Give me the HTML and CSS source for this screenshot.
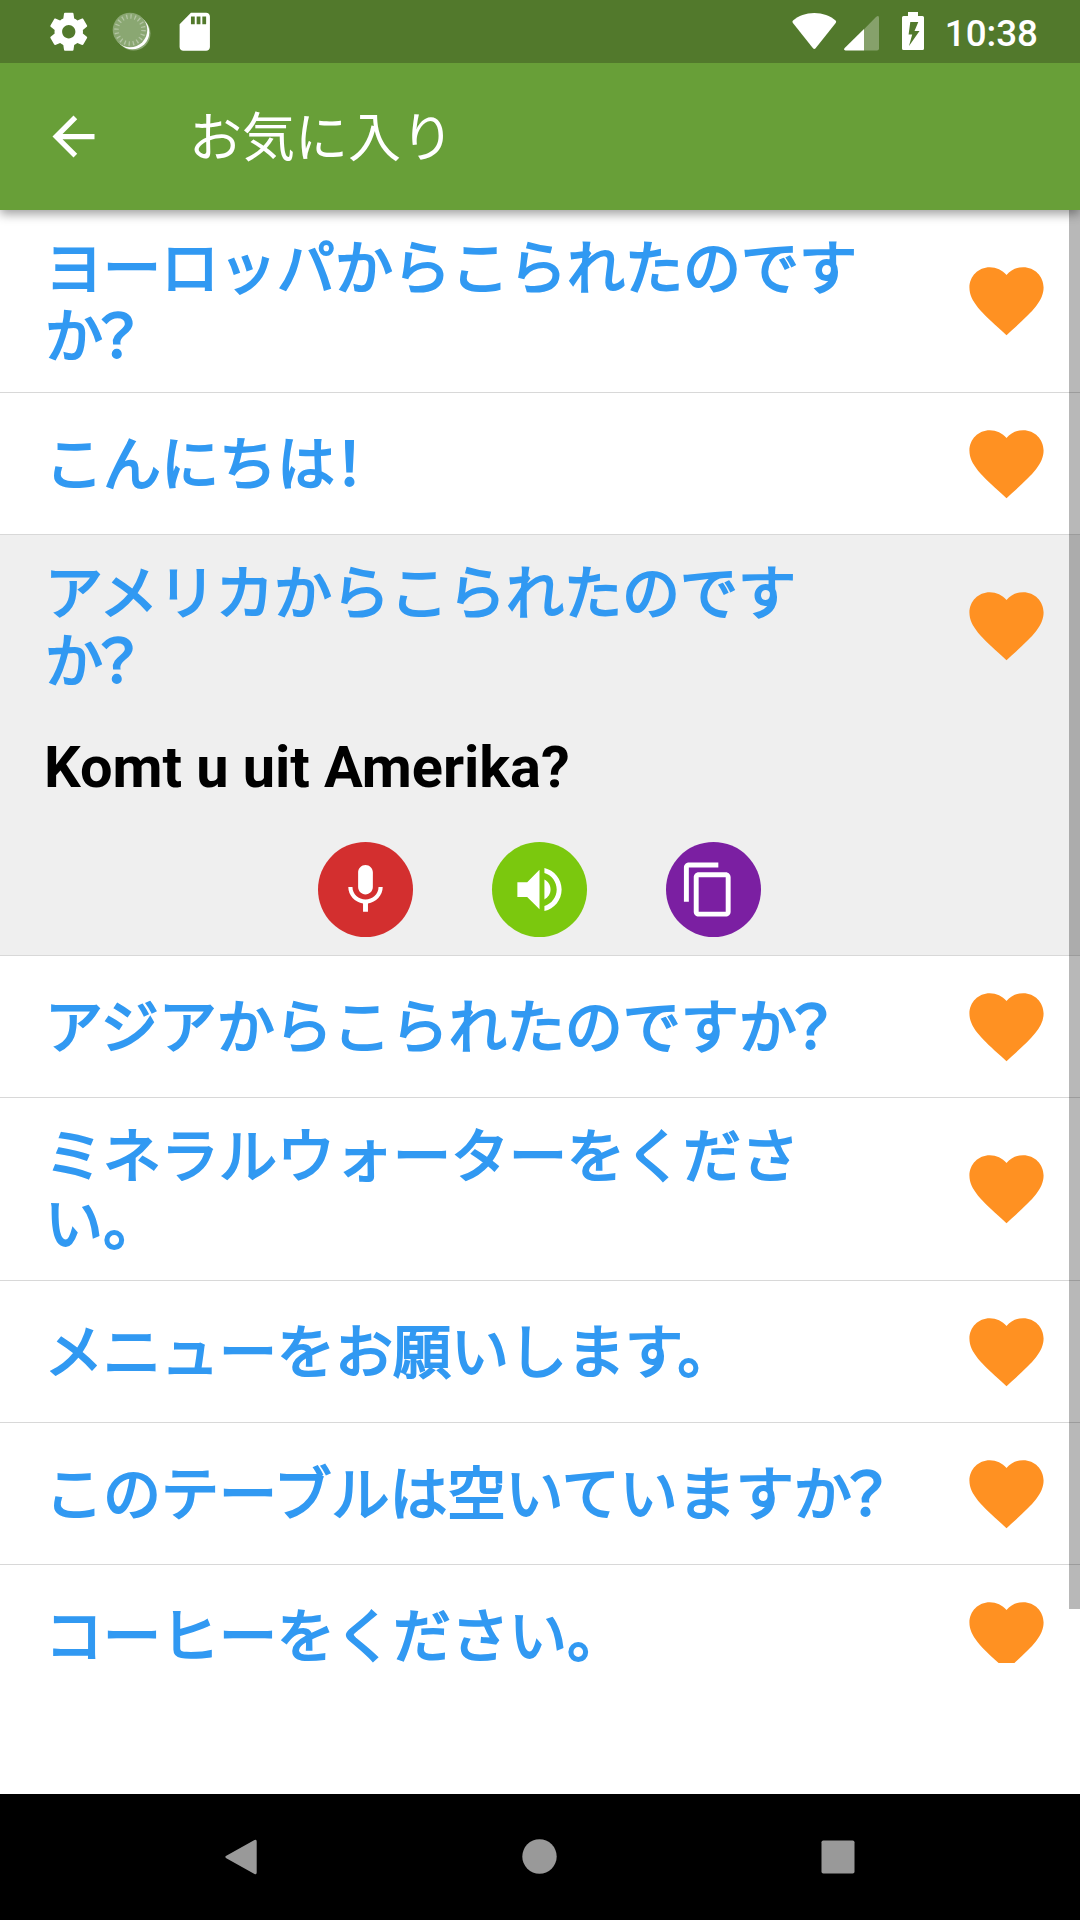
FILE: index.html
```html
<!DOCTYPE html>
<html lang="ja">
<head>
<meta charset="utf-8">
<title>お気に入り</title>
<link rel="stylesheet" href="styles.css">
</head>
<body>
<svg class="defs" width="0" height="0">
  <symbol id="heart" viewBox="0 0 24 24"><path d="M12 21.35l-1.45-1.32C5.4 15.36 2 12.28 2 8.5 2 5.42 4.42 3 7.5 3c1.74 0 3.41.81 4.5 2.09C13.09 3.81 14.76 3 16.5 3 19.58 3 22 5.42 22 8.5c0 3.78-3.4 6.86-8.55 11.54L12 21.35z"/></symbol>
</svg>
<div class="screen">
  <header class="status">
    <div class="status-left">
      <svg class="gear" viewBox="0 0 24 24"><path d="M19.43 12.98c.04-.32.07-.64.07-.98s-.03-.66-.07-.98l2.11-1.65c.19-.15.24-.42.12-.64l-2-3.46c-.12-.22-.39-.3-.61-.22l-2.49 1c-.52-.4-1.08-.73-1.69-.98l-.38-2.65C14.46 2.18 14.25 2 14 2h-4c-.25 0-.46.18-.49.42l-.38 2.65c-.61.25-1.17.59-1.69.98l-2.49-1c-.23-.09-.49 0-.61.22l-2 3.46c-.13.22-.07.49.12.64l2.11 1.65c-.04.32-.07.65-.07.98s.03.66.07.98l-2.11 1.65c-.19.15-.24.42-.12.64l2 3.46c.12.22.39.3.61.22l2.49-1c.52.4 1.08.73 1.69.98l.38 2.65c.03.24.24.42.49.42h4c.25 0 .46-.18.49-.42l.38-2.65c.61-.25 1.17-.59 1.69-.98l2.49 1c.23.09.49 0 .61-.22l2-3.46c.12-.22.07-.49-.12-.64l-2.11-1.65zM12 15.5c-1.93 0-3.5-1.57-3.5-3.5s1.57-3.5 3.5-3.5 3.5 1.57 3.5 3.5-1.57 3.5-3.5 3.5z"/></svg>
      <svg class="sync" viewBox="0 0 40 40"><circle cx="21.5" cy="21.5" r="17" fill="#8aa772"/><circle cx="20.3" cy="20.3" r="17" fill="#fff"/><circle cx="18" cy="18" r="17.3" fill="#8aa772"/><circle cx="18" cy="18" r="13.5" fill="none" stroke="#b3c5a3" stroke-width="4.5" stroke-dasharray="1.3 2.941"/></svg>
      <svg class="sd" viewBox="0 0 24 24"><path d="M18 2h-8L4.02 8 4 20c0 1.1.9 2 2 2h12c1.1 0 2-.9 2-2V4c0-1.1-.9-2-2-2zm-6 6h-2V4h2v4zm3 0h-2V4h2v4zm3 0h-2V4h2v4z"/></svg>
    </div>
    <div class="status-right">
      <svg class="wifi" viewBox="0 0 45 38"><path d="M22.3 1C13.8 1 6.400 4 1.300 8.200Q-.2 9.500.9 11L21 36.200Q22.300 37.600 23.600 36.200L43.700 11Q44.800 9.500 43.300 8.200C38.200 4 30.800 1 22.300 1z"/></svg>
      <svg class="signal" viewBox="0 0 35 36"><path opacity=".3" d="M20 14.200L32 2q3-2.500 3 1v30.500q0 2-2 2H20z"/><path d="M20 14V35.500H1.500Q-1 35 .7 33z"/></svg>
      <svg class="battery" viewBox="0 0 22 38"><path fill-rule="evenodd" d="M6 0h10v4h4.500q1.500 0 1.500 1.500V36.500q0 1.500-1.500 1.500H1.500Q0 38 0 36.500V5.500Q0 4 1.500 4H6zM8.300 10L6.600 22.500h3.600L7 34 17.500 19h-5L16.300 10z"/></svg>
      <span class="clock">10:38</span>
    </div>
  </header>
  <div class="toolbar">
    <svg class="back" viewBox="0 0 24 24"><path d="M20 11H7.830l5.590-5.590L12 4l-8 8 8 8 1.410-1.410L7.830 13H20v-2z"/></svg>
    <h1 class="title">お気に入り</h1>
  </div>
  <main class="content">
    <ul class="list">
      <li class="item tall"><div class="head"><p class="phrase">ヨーロッパからこられたのです<br>か<span class="mark">？</span></p><svg class="heart"><use href="#heart"/></svg></div></li>
      <li class="item"><div class="head"><p class="phrase">こんにちは<span class="mark">！</span></p><svg class="heart"><use href="#heart"/></svg></div></li>
      <li class="item tall open">
        <div class="head"><p class="phrase">アメリカからこられたのです<br>か<span class="mark">？</span></p><svg class="heart"><use href="#heart"/></svg></div>
        <p class="translation">Komt u uit Amerika?</p>
        <div class="actions">
          <span class="btn mic"><svg viewBox="0 0 24 24"><path d="M12 14c1.660 0 2.990-1.340 2.990-3L15 5c0-1.660-1.340-3-3-3S9 3.340 9 5v6c0 1.660 1.340 3 3 3zm5.300-3c0 3-2.540 5.100-5.300 5.100S6.700 14 6.700 11H5c0 3.410 2.720 6.230 6 6.720V21h2v-3.280c3.280-.48 6-3.300 6-6.720h-1.700z"/></svg></span>
          <span class="btn speak"><svg viewBox="0 0 24 24"><path d="M3 9v6h4l5 5V4L7 9H3zm13.500 3c0-1.770-1.020-3.290-2.500-4.030v8.050c1.480-.73 2.500-2.250 2.500-4.020zM14 3.230v2.060c2.890.86 5 3.540 5 6.710s-2.110 5.850-5 6.710v2.060c4.010-.91 7-4.490 7-8.770s-2.990-7.860-7-8.770z"/></svg></span>
          <span class="btn copy"><svg viewBox="0 0 24 24"><path d="M16 1H4c-1.100 0-2 .9-2 2v14h2V3h12V1zm3 4H8c-1.100 0-2 .9-2 2v14c0 1.100.9 2 2 2h11c1.100 0 2-.9 2-2V7c0-1.100-.9-2-2-2zm0 16H8V7h11v14z"/></svg></span>
        </div>
      </li>
      <li class="item"><div class="head"><p class="phrase">アジアからこられたのですか<span class="mark">？</span></p><svg class="heart"><use href="#heart"/></svg></div></li>
      <li class="item tall"><div class="head"><p class="phrase">ミネラルウォーターをくださ<br>い。</p><svg class="heart"><use href="#heart"/></svg></div></li>
      <li class="item"><div class="head"><p class="phrase">メニューをお願いします。</p><svg class="heart"><use href="#heart"/></svg></div></li>
      <li class="item"><div class="head"><p class="phrase">このテーブルは空いていますか<span class="mark">？</span></p><svg class="heart"><use href="#heart"/></svg></div></li>
      <li class="item"><div class="head"><p class="phrase">コーヒーをください。</p><svg class="heart"><use href="#heart"/></svg></div></li>
    </ul>
    <div class="scrollbar"></div>
  </main>
  <nav class="navbar">
    <svg viewBox="0 0 40 40"><path d="M5.300 18.800L33.500 3.100q2.200-1 2.200 1.300v31.200q0 2.300-2.200 1.300L5.300 21.200q-2-1.200 0-2.400z"/></svg>
    <svg viewBox="0 0 40 40"><circle cx="19.500" cy="19.500" r="17.200"/></svg>
    <svg viewBox="0 0 40 40"><rect x="3.500" y="3.400" width="33" height="33.200" rx="1.800"/></svg>
  </nav>
</div>
</body>
</html>
```
FILE: styles.css
```css
* { box-sizing: border-box; margin: 0; padding: 0; }

body {
  width: 1080px;
  height: 1920px;
  overflow: hidden;
  background: #fff;
  font-family: Roboto, "Noto Sans CJK JP", sans-serif;
}

.defs { position: absolute; }

svg { display: block; flex: none; }

.screen {
  display: flex;
  flex-direction: column;
  height: 1920px;
}

.status {
  position: relative;
  z-index: 3;
  display: flex;
  justify-content: space-between;
  flex: none;
  height: 63px;
  background: #52792c;
  color: #fff;
  fill: #fff;
}

.status-left {
  display: flex;
  align-items: flex-start;
  padding: 8.500px 0 0 45.500px;
}

.gear, .sd { width: 45.500px; height: 45.500px; }
.sync { width: 40px; height: 40px; margin: 3.500px 0 0 20.500px; }
.sd { margin-left: 20px; }

.status-right {
  display: flex;
  align-items: flex-start;
  padding: 12px 42px 0 0;
}

.wifi { width: 45px; height: 38px; }
.signal { width: 35px; height: 36px; margin: 2.500px 0 0 7px; }
.battery { width: 22px; height: 38px; margin-left: 23px; }

.clock {
  margin-left: 21px;
  font-size: 36.750px;
  font-weight: 500;
  line-height: 43px;
}

.toolbar {
  position: relative;
  z-index: 2;
  display: flex;
  align-items: center;
  flex: none;
  height: 147px;
  padding-left: 42px;
  background: #689f38;
  box-shadow: 0 4px 10px rgba(0, 0, 0, .38);
  color: #fff;
  fill: #fff;
}

.back { width: 63px; height: 63px; }

.title {
  margin-left: 84px;
  padding-bottom: 6px;
  font-family: "Noto Sans CJK JP", sans-serif;
  font-size: 53px;
  font-weight: 400;
  line-height: 62px;
}

.content {
  position: relative;
  flex: none;
  height: 1453px;
  overflow: hidden;
}

.list { list-style: none; }

.item { border-bottom: 1px solid #d8d8d8; }

.head {
  display: flex;
  align-items: center;
  justify-content: space-between;
  height: 141px;
  padding: 0 29px 0 45px;
}

.tall .head { height: 182px; }
.tall .heart { margin-bottom: 2px; }

.phrase {
  width: 880px;
  padding-bottom: 7px;
  color: #3199f2;
  font-family: "Noto Sans CJK JP", sans-serif;
  font-size: 58px;
  font-weight: 400;
  line-height: 68px;
  white-space: nowrap;
  -webkit-text-stroke: 2.100px #3199f2;
}

.tall .phrase { padding-bottom: 6px; }

/* Full-width punctuation set in a half-width cell */
.mark {
  margin: 0 -.25em;
  -webkit-text-stroke-width: 2.600px;
}

.heart {
  width: 89px;
  height: 89px;
  fill: #ff9122;
}

.open {
  height: 421px;
  background: #efefef;
}

.translation {
  height: 125px;
  padding: 16px 0 0 44px;
  color: #000;
  font-size: 57.750px;
  font-weight: 700;
  letter-spacing: -.06px;
  line-height: 68px;
}

.actions {
  display: flex;
  gap: 79px;
  padding-left: 318px;
}

.btn {
  display: flex;
  align-items: center;
  justify-content: center;
  width: 95px;
  height: 95px;
  border-radius: 50%;
  fill: #fff;
}

.btn svg { width: 59px; height: 59px; }

.mic { background: #d32f2f; }
.speak { background: #7bc80e; }
.copy { padding-right: 10px; background: #7b1fa2; }

.scrollbar {
  position: absolute;
  top: 0;
  right: 0;
  width: 11px;
  height: 1399px;
  background: rgba(0, 0, 0, .28);
}

.navbar {
  display: flex;
  align-items: center;
  justify-content: space-between;
  flex: none;
  height: 126px;
  margin-top: auto;
  padding: 0 222px 0 221px;
  background: #000;
  fill: #999;
}

.navbar svg { width: 40px; height: 40px; }
```
